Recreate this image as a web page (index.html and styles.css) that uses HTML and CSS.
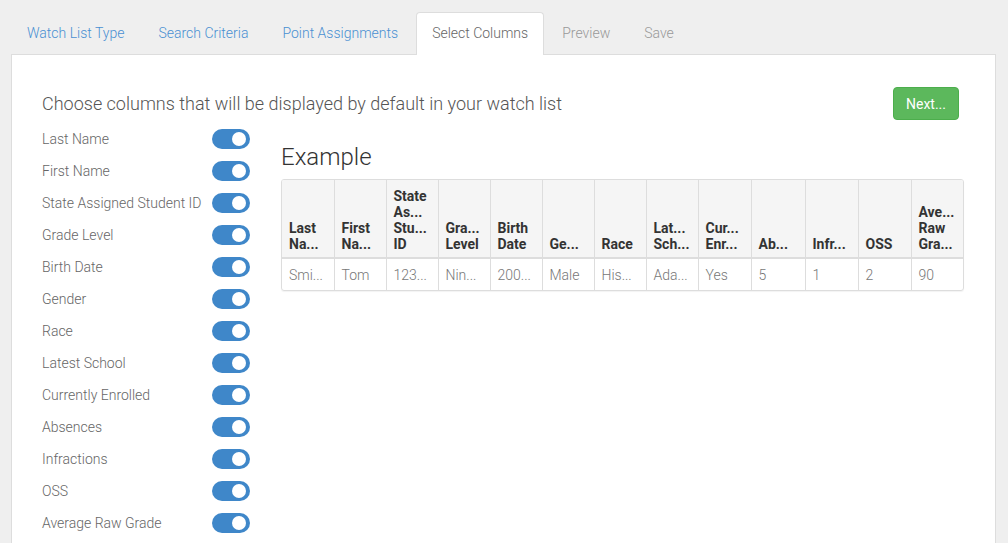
FILE: index.html
```html
<!DOCTYPE html>
<html>
<head>
<meta charset="utf-8">
<link rel="stylesheet" href="styles.css">
</head>
<body>
<div class="page">
  <ul class="tabs">
    <li class="tab"><a class="link">Watch List Type</a></li>
    <li class="tab"><a class="link">Search Criteria</a></li>
    <li class="tab"><a class="link">Point Assignments</a></li>
    <li class="tab active"><a class="link">Select Columns</a></li>
    <li class="tab disabled"><a class="link">Preview</a></li>
    <li class="tab disabled"><a class="link">Save</a></li>
  </ul>
  <div class="panel">
    <div class="header">
      <h2 class="title">Choose columns that will be displayed by default in your watch list</h2>
      <button class="btn-next">Next...</button>
    </div>
    <div class="body">
      <ul class="columns">
        <li class="col-row"><span>Last Name</span><span class="toggle"></span></li>
        <li class="col-row"><span>First Name</span><span class="toggle"></span></li>
        <li class="col-row"><span>State Assigned Student ID</span><span class="toggle"></span></li>
        <li class="col-row"><span>Grade Level</span><span class="toggle"></span></li>
        <li class="col-row"><span>Birth Date</span><span class="toggle"></span></li>
        <li class="col-row"><span>Gender</span><span class="toggle"></span></li>
        <li class="col-row"><span>Race</span><span class="toggle"></span></li>
        <li class="col-row"><span>Latest School</span><span class="toggle"></span></li>
        <li class="col-row"><span>Currently Enrolled</span><span class="toggle"></span></li>
        <li class="col-row"><span>Absences</span><span class="toggle"></span></li>
        <li class="col-row"><span>Infractions</span><span class="toggle"></span></li>
        <li class="col-row"><span>OSS</span><span class="toggle"></span></li>
        <li class="col-row"><span>Average Raw Grade</span><span class="toggle"></span></li>
      </ul>
      <div class="example">
        <h3 class="example-title">Example</h3>
        <div class="table-wrap">
          <table class="grid">
            <colgroup>
              <col class="c52"><col class="c52"><col class="c52"><col class="c52">
              <col class="c52"><col class="c52"><col class="c52"><col class="c52">
              <col class="c53"><col class="c54"><col class="c53"><col class="c53"><col class="c54">
            </colgroup>
            <thead>
              <tr>
                <th>Last<br>Na...</th>
                <th>First<br>Na...</th>
                <th>State<br>As...<br>Stu...<br>ID</th>
                <th>Gra...<br>Level</th>
                <th>Birth<br>Date</th>
                <th>Ge...</th>
                <th>Race</th>
                <th>Lat...<br>Sch...</th>
                <th>Cur...<br>Enr...</th>
                <th>Ab...</th>
                <th>Infr...</th>
                <th>OSS</th>
                <th>Ave...<br>Raw<br>Gra...</th>
              </tr>
            </thead>
            <tbody>
              <tr>
                <td>Smi...</td>
                <td>Tom</td>
                <td>123...</td>
                <td>Nin...</td>
                <td>200...</td>
                <td>Male</td>
                <td>His...</td>
                <td>Ada...</td>
                <td>Yes</td>
                <td>5</td>
                <td>1</td>
                <td>2</td>
                <td>90</td>
              </tr>
            </tbody>
          </table>
        </div>
      </div>
    </div>
  </div>
</div>
</body>
</html>
```
FILE: styles.css
```css
* { box-sizing: border-box; }
html, body {
  margin: 0;
  padding: 0;
  background: #efefef;
  font-family: Roboto, "Liberation Sans", Arial, sans-serif;
  font-size: 14px;
  height: 100%;
  overflow: hidden;
}
.page {
  padding: 12px 12px 0 11px;
}
.tabs {
  list-style: none;
  margin: 0 0 -1px 0;
  padding: 0;
  display: flex;
  position: relative;
  z-index: 1;
}
.tab {
  margin-right: 2px;
}
.link {
  display: block;
  padding: 10px 15px 11px;
  line-height: 20px;
  border: 1px solid transparent;
  border-bottom: none;
  border-radius: 4px 4px 0 0;
  color: #4a90d2;
  font-weight: 300;
}
.tab.active .link {
  background: #fff;
  border-color: #ddd;
  color: #666;
  padding-bottom: 12px;
}
.tab.disabled .link {
  color: #999;
}
.panel {
  background: #fff;
  border: 1px solid #ddd;
  border-bottom: none;
  padding: 32px 36px 0 30px;
  height: 600px;
}
.header {
  display: flex;
  align-items: center;
  justify-content: space-between;
  height: 33px;
}
.title {
  margin: 0;
  font-size: 18px;
  font-weight: 300;
  color: #555;
  line-height: 26px;
}
.btn-next {
  font-family: inherit;
  font-size: 14px;
  font-weight: 400;
  color: #fff;
  background: #5cb85c;
  border: 1px solid #4cae4c;
  border-radius: 4px;
  height: 33px;
  padding: 0 12px;
  line-height: 20px;
}
.body {
  display: flex;
  gap: 31px;
  margin-top: 3px;
}
.columns {
  list-style: none;
  margin: 0;
  padding: 0;
  width: 208px;
  flex: none;
}
.col-row {
  display: flex;
  align-items: center;
  justify-content: space-between;
  height: 32px;
  color: #666;
  font-weight: 300;
}
.toggle {
  position: relative;
  width: 38px;
  height: 20px;
  border-radius: 10px;
  background: #3f87c9;
  flex: none;
}
.toggle::after {
  content: "";
  position: absolute;
  right: 4px;
  top: 3px;
  width: 14px;
  height: 14px;
  border-radius: 50%;
  background: #fff;
}
.example {
  width: 683px;
  flex: none;
}
.example-title {
  margin: 19px 0 7px;
  font-size: 24px;
  font-weight: 300;
  line-height: 30px;
  color: #333;
}
.table-wrap {
  border: 1px solid #ddd;
  border-radius: 3px;
  overflow: hidden;
  box-shadow: 0 1px 1px rgba(0,0,0,0.05);
}
.grid {
  width: 100%;
  table-layout: fixed;
  border-collapse: collapse;
}
.c52 { width: 52px; }
.c53 { width: 53px; }
.c54 { width: 54px; }
.grid th {
  background: #f5f5f5;
  color: #333;
  font-weight: 700;
  text-align: left;
  vertical-align: bottom;
  line-height: 16px;
  padding: 8px 6px 5px 7px;
  border-right: 1px solid #ddd;
  border-bottom: 2px solid #ddd;
  white-space: nowrap;
  overflow: hidden;
}
.grid td {
  color: #777;
  font-weight: 300;
  line-height: 16px;
  padding: 8px 6px 7px 7px;
  border-right: 1px solid #ddd;
  white-space: nowrap;
  overflow: hidden;
}
.grid th:last-child, .grid td:last-child {
  border-right: none;
}
```
